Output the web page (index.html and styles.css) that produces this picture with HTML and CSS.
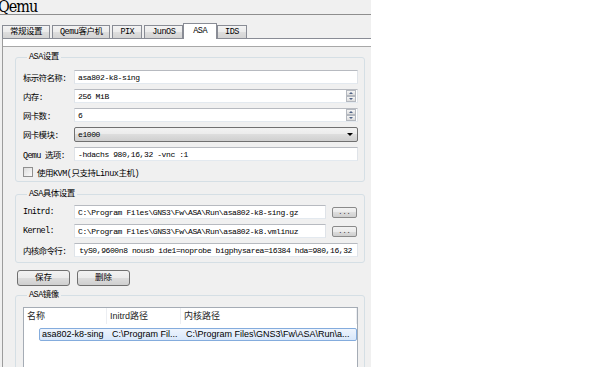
FILE: index.html
```html
<!DOCTYPE html>
<html lang="zh-cn">
<head>
  <meta charset="UTF-8" />
  <title>Qemu</title>
  <link rel="stylesheet" href="styles.css">
</head>
<body>
  <div class="window">
    <div class="title">Qemu</div>
    <div class="tabs">
      <div class="tab">常规设置</div>
      <div class="tab">Qemu客户机</div>
      <div class="tab">PIX</div>
      <div class="tab">JunOS</div>
      <div class="tab active">ASA</div>
      <div class="tab">IDS</div>
    </div>
    <div class="pane">
      <div class="scroll">
        <fieldset class="group">
          <legend>ASA设置</legend>
          <div class="form">
            <label>标示符名称:</label>
            <div class="field">asa802-k8-sing</div>
            <label>内存:</label>
            <div class="field">256 MiB<span class="spin"><i class="up"></i><i class="down"></i></span></div>
            <label>网卡数:</label>
            <div class="field">6<span class="spin"><i class="up"></i><i class="down"></i></span></div>
            <label>网卡模块:</label>
            <div class="combo">e1000<span class="arrow"></span></div>
            <label>Qemu 选项:</label>
            <div class="field">-hdachs 980,16,32 -vnc :1</div>
            <div class="check"><span class="box"></span>使用KVM(只支持Linux主机)</div>
          </div>
        </fieldset>

        <fieldset class="group detail">
          <legend>ASA具体设置</legend>
          <div class="form wide">
            <label>Initrd:</label>
            <div class="field">C:\Program Files\GNS3\Fw\ASA\Run\asa802-k8-sing.gz</div>
            <button class="browse">...</button>
            <label>Kernel:</label>
            <div class="field">C:\Program Files\GNS3\Fw\ASA\Run\asa802-k8.vmlinuz</div>
            <button class="browse">...</button>
            <label>内核命令行:</label>
            <div class="field span scrolled"><span>tyS0,9600n8 nousb ide1=noprobe bigphysarea=16384 hda=980,16,32</span></div>
          </div>
        </fieldset>

        <div class="actions">
          <button class="btn">保存</button>
          <button class="btn">删除</button>
        </div>

        <fieldset class="group images">
          <legend>ASA镜像</legend>
          <div class="tree">
            <div class="tree-head">
              <span>名称</span>
              <span>Initrd路径</span>
              <span>内核路径</span>
            </div>
            <div class="tree-row selected">
              <span>asa802-k8-sing</span>
              <span>C:\Program Fil...</span>
              <span>C:\Program Files\GNS3\Fw\ASA\Run\a...</span>
            </div>
          </div>
        </fieldset>
      </div>
    </div>
  </div>
</body>
</html>
```

FILE: styles.css
```css
body {
  margin: 0;
  background: #fff;
  font-family: "Liberation Mono", "Noto Sans CJK SC", monospace;
  font-size: 8.5px;
  letter-spacing: -0.5px;
  color: #000;
}
.window {
  width: 371px;
  height: 367px;
  background: #f0f0f0;
  overflow: hidden;
}
.title {
  height: 14px;
  line-height: 14px;
  border-bottom: 1px solid #8e8e8e;
  font-family: "DejaVu Serif Condensed", "Liberation Serif", serif;
  font-size: 16px;
  letter-spacing: -1px;
  text-indent: -2px;
  overflow: hidden;
}
.tabs {
  display: flex;
  align-items: flex-end;
  gap: 2px;
  height: 23px;
  padding-left: 2px;
}
.tab {
  box-sizing: border-box;
  height: 13px;
  line-height: 12px;
  padding: 0 7px;
  border: 1px solid #898c95;
  border-bottom: none;
  background: linear-gradient(#f3f3f3, #ebebeb 50%, #dedede 50%, #d4d4d4);
  white-space: nowrap;
}
.tab.active {
  position: relative;
  height: 16px;
  margin: 0 -2px -1px;
  padding: 0 9px;
  line-height: 15px;
  background: #fff;
}
.pane {
  margin-left: 2px;
  border-top: 1px solid #898c95;
  border-left: 1px solid #9c9c9c;
  background: #fff;
}
.scroll {
  margin-top: 7px;
  padding: 5px 6px 0 12px;
  border-top: 1px solid #a8a8a8;
  background: #f0f0f0;
  height: 320px;
}
.group {
  margin: 0;
  min-width: 0;
  padding: 8px 6px 3px 7px;
  border: 1px solid #d5dfe5;
  border-radius: 3px;
}
.group legend {
  margin-left: 4px;
  padding: 0 2px;
  line-height: 10px;
}
.form {
  display: grid;
  grid-template-columns: 51px 1fr;
  row-gap: 5px;
  align-items: center;
}
.form label {
  white-space: nowrap;
  letter-spacing: -0.7px;
}
.form.wide {
  grid-template-columns: 51px 1fr 26px;
  column-gap: 6px;
}
.form.wide .field {
  margin-left: -6px;
}
.form.wide .browse {
  margin-left: 0;
}
.field {
  box-sizing: border-box;
  height: 14px;
  display: flex;
  align-items: center;
  justify-content: space-between;
  padding: 0 1px 0 3px;
  background: #fff;
  border: 1px solid;
  border-color: #b7bac0 #dfe3e8 #e3e9ef #dfe3e8;
  font-size: 8px;
  letter-spacing: -0.4px;
  white-space: nowrap;
  overflow: hidden;
}
.field.span {
  grid-column: 2 / -1;
}
.field.scrolled {
  justify-content: flex-end;
  padding-right: 5px;
}
.spin {
  display: flex;
  flex-direction: column;
}
.spin i {
  box-sizing: border-box;
  width: 10px;
  height: 6px;
  border: 1px solid #b4b8bf;
  background: linear-gradient(#f6f6f6, #dcdcdc);
  display: flex;
  align-items: center;
  justify-content: center;
}
.spin i::after {
  content: "";
  border-left: 2px solid transparent;
  border-right: 2px solid transparent;
}
.spin .up::after {
  border-bottom: 2px solid #4d6185;
}
.spin .down::after {
  border-top: 2px solid #4d6185;
}
.combo {
  box-sizing: border-box;
  height: 15px;
  display: flex;
  align-items: center;
  justify-content: space-between;
  padding: 0 4px 0 3px;
  border: 1px solid #707070;
  border-radius: 2px;
  background: linear-gradient(#f2f2f2, #ebebeb 50%, #dddddd 50%, #cfcfcf);
  font-size: 8px;
  letter-spacing: -0.4px;
}
.arrow {
  width: 0;
  height: 0;
  border-left: 3px solid transparent;
  border-right: 3px solid transparent;
  border-top: 3px solid #000;
}
.check {
  grid-column: 1 / -1;
  display: flex;
  align-items: center;
  gap: 4px;
  height: 12px;
}
.check .box {
  box-sizing: border-box;
  width: 10px;
  height: 10px;
  border: 1px solid #8f8f8f;
  background: linear-gradient(135deg, #dcdcdc, #fbfbfb);
}
.detail {
  margin-top: 7px;
  padding-top: 6px;
  padding-bottom: 5px;
}
.browse {
  box-sizing: border-box;
  width: 25px;
  height: 11px;
  padding: 0;
  border: 1px solid #8a8a8a;
  border-radius: 2px;
  background: linear-gradient(#f2f2f2, #ebebeb 50%, #dddddd 50%, #cfcfcf);
  font: inherit;
  font-size: 7px;
  line-height: 6px;
  color: #333;
}
.actions {
  display: flex;
  gap: 7px;
  margin-top: 7px;
  padding-left: 2px;
}
.btn {
  box-sizing: border-box;
  width: 53px;
  height: 16px;
  padding: 0;
  border: 1px solid #707070;
  border-radius: 3px;
  background: linear-gradient(#f2f2f2, #ebebeb 50%, #dddddd 50%, #cfcfcf);
  font: inherit;
  line-height: 14px;
}
.images {
  margin-top: 4px;
  padding-top: 7px;
  height: 120px;
}
.tree {
  height: 100px;
  border: 1px solid #a5acb5;
  background: #fff;
  font-family: "Liberation Sans", "Noto Sans CJK SC", sans-serif;
  font-size: 9px;
  letter-spacing: 0;
}
.tree-head {
  display: grid;
  grid-template-columns: 83px 74px 1fr;
  height: 16px;
  line-height: 16px;
  color: #1e1e1e;
}
.tree-head span {
  padding-left: 3px;
  border-right: 1px solid #eceef2;
}
.tree-row {
  display: grid;
  grid-template-columns: 68px 74px 1fr;
  margin: 4px 0 0 15px;
  height: 13px;
  line-height: 11px;
  padding-left: 2px;
  box-sizing: border-box;
  white-space: nowrap;
}
.tree-row span + span {
  padding-left: 2px;
}
.tree-row.selected {
  border: 1px solid #84acdd;
  border-radius: 2px;
  background: linear-gradient(#eef4fd, #d8e7fa);
}
```
